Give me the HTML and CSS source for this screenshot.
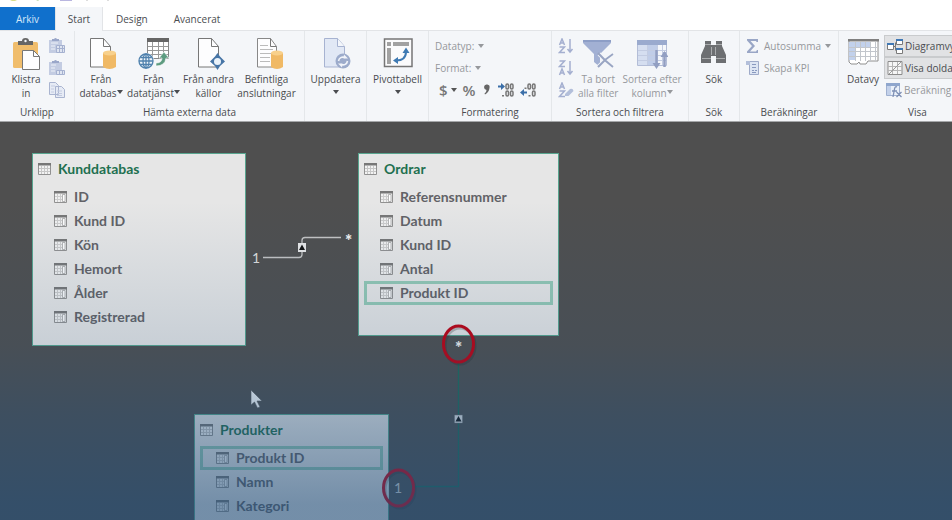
FILE: index.html
```html
<!DOCTYPE html>
<html lang="sv">
<head>
<meta charset="utf-8">
<title>Diagramvy</title>
<link rel="stylesheet" href="styles.css">
</head>
<body>
<svg class="defs" aria-hidden="true">
  <symbol id="table" viewBox="0 0 13 12">
    <path d="M.5 .5h12v11h-12z" fill="#f2f2f2" stroke="#919191"/>
    <path d="M0 0h13v2.500H0z" fill="#777"/>
    <path d="M3.500 3v8M6.500 3v8M9.500 3v8M1 5.500h11M1 8.500h11" stroke="#c6c6c6" fill="none"/>
  </symbol>
  <symbol id="column" viewBox="0 0 13 12">
    <path d="M.5 .5h12v11h-12z" fill="#f0f0f0" stroke="#919191"/>
    <path d="M0 0h13v2.500H0z" fill="#777"/>
    <path d="M3.500 3v8M6.500 3v8M1 5.500h7M1 8.500h7" stroke="#ccc" fill="none"/>
    <path d="M8.500 3.500h2.500v7H8.500z" fill="#fff" stroke="#999" stroke-width=".7"/>
  </symbol>
</svg>

<header class="titlebar">
  <svg width="130" height="3" viewBox="0 0 130 3" aria-hidden="true"><path d="M10 0h7l-2 1h-3z" fill="#d9dc8a"/><path d="M36 0h3l-1 1z" fill="#b9d7a8"/><path d="M60 0h12v1H60z" fill="#b9b6e0"/><path d="M86 0h2M107 0h2" stroke="#bbb"/></svg>
</header>
<nav class="tabs">
  <button class="tab tab-file">Arkiv</button>
  <button class="tab tab-active">Start</button>
  <button class="tab">Design</button>
  <button class="tab">Avancerat</button>
</nav>

<section class="ribbon">
  <div class="group g-clip">
    <div class="tools">
      <button class="big">
        <svg width="32" height="32" viewBox="0 0 32 32"><rect x="3" y="4" width="25" height="26" rx="1.500" fill="#f0bd6c"/><path d="M8 7V3h4q0-3 3.500-3T19 3h4v4z" fill="#666"/><circle cx="15.500" cy="3" r="1.200" fill="#f4f6f9"/><path d="M12.500 12.500h11l6 6v13h-17z" fill="#fdfdfe" stroke="#777"/><path d="M23.500 12.500v6h6" fill="none" stroke="#777"/></svg>
        <span>Klistra<br>in</span>
      </button>
      <div class="stack small">
        <button class="mini" disabled aria-label="Lägg till"><svg width="18" height="16" viewBox="0 0 18 16"><path d="M1 2h13v13H1z" fill="#c3cce2"/><path d="M4 3V1h2q1.500-2 3 0h2v2z" fill="#9aa7c9"/><path d="M3 5h7M3 8h4M3 11h4" stroke="#edf1f8"/><path d="M8.500 7.500h8v7h-8zM8 10.500h9M11.500 8v6M14.500 8v6" fill="#dfe5f1" stroke="#a5b1d0"/></svg></button>
        <button class="mini" disabled aria-label="Ersätt"><svg width="18" height="16" viewBox="0 0 18 16"><path d="M1 2h13v13H1z" fill="#c3cce2"/><path d="M4 3V1h2q1.500-2 3 0h2v2z" fill="#9aa7c9"/><path d="M3 5h5M3 8h4M3 11h4" stroke="#edf1f8"/><path d="M8.500 10.500h8v4h-8zM11.500 10v5M14.500 10v5" fill="#dfe5f1" stroke="#a5b1d0"/></svg></button>
        <button class="mini" disabled aria-label="Kopiera"><svg width="18" height="16" viewBox="0 0 18 16"><path d="M1.500 .5h6l3 3v9h-9zM7.500 4.500h6l3 3v8h-9z" fill="#e6ebf5" stroke="#a9b4d0"/><path d="M3 4h4M3 7h3M3 10h3M9 9h5M9 11.500h5M9 13.500h5" stroke="#c3cbe0"/></svg></button>
      </div>
    </div>
    <h2>Urklipp</h2>
  </div>

  <div class="group g-data">
    <div class="tools">
      <button class="big">
        <svg width="32" height="32" viewBox="0 0 32 32"><path d="M5.500 .5h13l7 8v20.500h-20z" fill="#fdfdfe" stroke="#777"/><path d="M18.500 .5v8h7" fill="none" stroke="#777"/><path d="M18 15v14q6.500 4 13 0V15z" fill="#f0b965"/><ellipse cx="24.500" cy="15" rx="6.500" ry="2.500" fill="#f8d08b"/></svg>
        <span>Från<br>databas<i class="caret"></i></span>
      </button>
      <button class="big">
        <svg width="32" height="32" viewBox="0 0 32 32"><path d="M9.500 .5h21v20h-21z" fill="#fff" stroke="#888"/><path d="M9 0h22v4H9z" fill="#666"/><path d="M14.500 4v16M20.500 4v16M25.500 4v16M10 8.500h20M10 12.500h20M10 16.500h20" stroke="#999" fill="none"/><circle cx="8" cy="23" r="8" fill="#eef4fa"/><g fill="none" stroke="#4f81ad" stroke-width="1.300"><circle cx="8" cy="23" r="7"/><ellipse cx="8" cy="23" rx="3" ry="7"/><path d="M1 23h14M8 16v14M2.500 19.500h11M2.500 26.500h11"/></g><path d="M18 25q6 0 6-5h-3l5-6 5 6h-3q-1 8-10 8z" fill="#5d9b80" stroke="#fff" stroke-width=".6"/></svg>
        <span>Från<br>datatjänst<i class="caret"></i></span>
      </button>
      <button class="big">
        <svg width="32" height="32" viewBox="0 0 32 32"><path d="M5.500 .5h13l7 8v20.500h-20z" fill="#fdfdfe" stroke="#777"/><path d="M18.500 .5v8h7" fill="none" stroke="#777"/><path d="M24.500 15l2.500 3.500 5 5-5 4.500-2.500 4-2.500-4-5-4.500 5-5z" fill="#4775a6"/><circle cx="24.500" cy="23.500" r="3.500" fill="#eaf2fa"/></svg>
        <span>Från andra<br>källor</span>
      </button>
      <button class="big">
        <svg width="32" height="32" viewBox="0 0 32 32"><path d="M6.500 .5h13l6 8v20.500h-19z" fill="#fdfdfe" stroke="#888"/><path d="M19.500 .5v8h6" fill="none" stroke="#777"/><path d="M9 7.500h8M9 11.500h13M9 15.500h11M9 19.500h10M9 23.500h10" stroke="#bbb"/><path d="M20 15v14q6 4 12 0V15z" fill="#f0b965"/><ellipse cx="26" cy="15" rx="6" ry="2.500" fill="#f8d08b"/></svg>
        <span>Befintliga<br>anslutningar</span>
      </button>
    </div>
    <h2>Hämta externa data</h2>
  </div>

  <div class="group g-one">
    <div class="tools">
      <button class="big">
        <svg width="32" height="32" viewBox="0 0 32 32"><path d="M4.500 .5h13l7 8v20.500h-20z" fill="#e1e8f5" stroke="#a7b3d1"/><path d="M17.500 .5v8h7" fill="#f3f6fb" stroke="#a7b3d1"/><circle cx="23" cy="23" r="7.500" fill="#9cabcb"/><path d="M18.500 23q1-5 7-3.500M27.500 23q-1 5-7 3.500" fill="none" stroke="#f1f4fa" stroke-width="1.600"/><path d="M24 16.500l4 4h-4.500zM22 29.500l-4-4h4.500z" fill="#f1f4fa"/></svg>
        <span>Uppdatera<br><i class="caret"></i></span>
      </button>
    </div>
  </div>

  <div class="group g-one">
    <div class="tools">
      <button class="big">
        <svg width="32" height="32" viewBox="0 0 32 32"><path d="M2.500 1h27.500v27.500H2.500z" fill="#fbfbfc" stroke="#757575" stroke-width="1.500"/><path d="M5 4h4v4H5zM11 4h16v4H11zM5 10h4v16H5z" fill="#a2a2a2"/><path d="M14 22.500q10 0 10-9" fill="none" stroke="#3f7ab3" stroke-width="2"/><path d="M24 9.500l3.500 5.500h-7zM11 22.500l5-3.500v7z" fill="#3f7ab3"/></svg>
        <span>Pivottabell<br><i class="caret"></i></span>
      </button>
    </div>
  </div>

  <div class="group g-format">
    <div class="tools stack">
      <button class="line" disabled>Datatyp:<i class="caret"></i></button>
      <button class="line" disabled>Format:<i class="caret"></i></button>
      <div class="line formats">
        <button class="sym" aria-label="Valuta"><b>$</b><i class="caret"></i></button>
        <button class="sym" aria-label="Procent"><b>%</b></button>
        <button class="sym" aria-label="Tusental"><svg width="10" height="12" viewBox="-1 0 10 12"><path d="M1 3a2.800 2.800 0 1 1 5.500 1Q6 8 2 10.500L1.500 9.500Q3.500 8 3.500 6Q1 5.500 1 3z" fill="#666"/></svg></button>
        <button class="sym" aria-label="Öka decimal"><svg width="16" height="14" viewBox="0 0 16 14"><path d="M0 2.500h3V0l4 3.500L3 7V4.500H0z" fill="#3a6ea8"/><g fill="none" stroke="#777" stroke-width="1.500"><rect x="8" y="1" width="2.500" height="5" rx="1.200"/><rect x="12.500" y="1" width="2.500" height="5" rx="1.200"/><rect x="8" y="8" width="2.500" height="5" rx="1.200"/><rect x="12.500" y="8" width="2.500" height="5" rx="1.200"/></g><path d="M4 12h2v1.500H4z" fill="#777"/></svg></button>
        <button class="sym" aria-label="Minska decimal"><svg width="16" height="14" viewBox="0 0 16 14"><path d="M7 8.500H4V6L0 9.500 4 13v-2.500h3z" fill="#3a6ea8"/><g fill="none" stroke="#777" stroke-width="1.500"><rect x="8" y="1" width="2.500" height="5" rx="1.200"/><rect x="12.500" y="1" width="2.500" height="5" rx="1.200"/><rect x="12.500" y="8" width="2.500" height="5" rx="1.200"/></g><path d="M4.500 4.500h2V6h-2zM8.500 12h2v1.500h-2z" fill="#777"/></svg></button>
      </div>
    </div>
    <h2>Formatering</h2>
  </div>

  <div class="group g-sort">
    <div class="tools">
      <div class="stack">
        <button class="mini" disabled aria-label="Stigande"><svg width="16" height="16" viewBox="0 0 16 16"><g fill="none" stroke="#a4afd0" stroke-width="1.500"><path d="M1.500 7l2.500-6 2.500 6M2 5h4M1.500 9h5l-5 5.500H7M12 1v13M9.500 11l2.500 3 2.500-3"/></g></svg></button>
        <button class="mini" disabled aria-label="Fallande"><svg width="16" height="16" viewBox="0 0 16 16"><g fill="none" stroke="#a4afd0" stroke-width="1.500"><path d="M1.500 1h5l-5 5.500H7M1.500 15l2.500-6 2.500 6M2 13h4M12 1v13M9.500 11l2.500 3 2.500-3"/></g></svg></button>
        <button class="mini" disabled aria-label="Rensa sortering"><svg width="16" height="16" viewBox="0 0 16 16"><g fill="none" stroke="#a4afd0" stroke-width="1.500"><path d="M1.500 7l2.500-6 2.500 6M2 5h4M1.500 9h5l-5 5.500H7"/></g><path d="M7 12l5-5q3-1 3.500 2l-5 5H7z" fill="#b3bfda"/></svg></button>
      </div>
      <button class="big" disabled>
        <svg width="32" height="32" viewBox="0 0 32 32"><path d="M1 2h28v3L18 16v13l-6-5v-8L1 5z" fill="#a2b0d3"/><path d="M1 2h28v2H1z" fill="#8d9ec6"/><path d="M17 16l14 13M30 16L15 30" stroke="#f4f6f9" stroke-width="4"/><path d="M16 15q7 8 15 14M31 16q-8 5-15 13" stroke="#99a5c3" stroke-width="2" fill="none"/></svg>
        <span>Ta bort<br>alla filter</span>
      </button>
      <button class="big" disabled>
        <svg width="32" height="32" viewBox="0 0 32 32"><path d="M1.500 3.500h29v24h-29z" fill="#f5f7fb" stroke="#b3bdd7"/><path d="M1 2h30v5H1z" fill="#9aaace"/><path d="M2 7h10v20H2z" fill="#d5def0"/><path d="M12 7h9v20h-9z" fill="#c0cde8"/><path d="M11.500 7v20M21.500 7v20M26.500 7v20M2 12.500h28M2 17.500h28M2 22.500h28" stroke="#c3cce2"/><path d="M20.500 12v16M28.500 29V14" stroke="#929fc2" stroke-width="2.500"/><path d="M16.500 25h8l-4 6zM24.500 19h8l-4-6z" fill="#929fc2"/></svg>
        <span>Sortera efter<br>kolumn<i class="caret"></i></span>
      </button>
    </div>
    <h2>Sortera och filtrera</h2>
  </div>

  <div class="group g-find">
    <div class="tools">
      <button class="big">
        <svg width="32" height="32" viewBox="0 0 32 32"><path d="M7 3h6v4h5V3h6v5l4 9v8h-10v-7h-5v7H3v-8L7 8z" fill="#6d6f72"/><path d="M7 6.500h6M18 6.500h6M4 20.500h9M18 20.500h9M13.500 9v8M17.500 9v8" stroke="#a9abad"/></svg>
        <span>Sök</span>
      </button>
    </div>
    <h2>Sök</h2>
  </div>

  <div class="group g-calc">
    <div class="tools stack">
      <button class="line" disabled><svg width="14" height="16" viewBox="0 0 14 16"><path d="M1 1h11v3h-1.500l-.5-1H4.500L9 8l-5 5.500h6l1-1.500h1v3H1v-1.500L6 8 1 2.500z" fill="#99a6c6"/></svg><span>Autosumma</span><i class="caret"></i></button>
      <button class="line" disabled><svg width="14" height="16" viewBox="0 0 14 16"><path d="M3.500 1.500h9v13h-9z" fill="#dde5f3" stroke="#9fabc9"/><path d="M0 1h4v4H0z" fill="#b3bfda"/><path d="M6 4.500h4M6 7.500h4M6 10.500h2M9 10.500h2M6 12.500h4" stroke="#8999bf"/></svg><span>Skapa KPI</span></button>
    </div>
    <h2>Beräkningar</h2>
  </div>

  <div class="group g-view">
    <div class="tools">
      <button class="big">
        <svg width="32" height="32" viewBox="0 0 32 32"><path d="M2 2h29v21H21l-2 3h-6l-1-2-2 2H4l-2-2z" fill="#fff" stroke="#909090"/><path d="M2 4h6v18H2zM8 4h15v5H8z" fill="#c2d1ec"/><path d="M1 1h31v2.500H1z" fill="#808080"/><path d="M8.500 4v19M13.500 4v19M18.500 4v19M23.500 4v19M28.500 4v19M2 9.500h28M2 13.500h28M2 18.500h28" stroke="#c2c6cc"/></svg>
        <span>Datavy</span>
      </button>
      <div class="stack toggles">
        <button class="line toggle" aria-pressed="true"><svg width="16" height="16" viewBox="0 0 16 16"><g fill="#fff" stroke="#7a7a7a"><path d="M.5 5.500h6v6h-6zM9.500 1.500h6v5h-6zM9.500 10.500h6v5h-6z"/></g><path d="M0 5h7v2H0zM9 1h7v2H9zM9 10h7v2H9z" fill="#3f78b5"/><path d="M7 8.500h1.500V4.500M8.500 8.500v4" stroke="#777" fill="none"/></svg><span>Diagramvy</span></button>
        <button class="line toggle" aria-pressed="true"><svg width="16" height="16" viewBox="0 0 16 16"><path d="M1 1.500h14v13H1z" fill="#f6f6f6" stroke="#8c8c8c"/><path d="M5.500 2v12M10.500 2v12M1 6.500h14M1 10.500h14" stroke="#b5b5b5"/><path d="M2 14L14 2" stroke="#999"/></svg><span>Visa dolda</span></button>
        <button class="line" disabled><svg width="16" height="16" viewBox="0 0 16 16"><path d="M.5 2.500h13v11H.5z" fill="#eaf0f9" stroke="#9fb0d0"/><path d="M0 1h14v3H0z" fill="#8fa6cd"/><path d="M1 4h4v9H1z" fill="#c3d1ea"/><path d="M11 5q-2-1-2.500 2L7 15M6 9h5M10.500 10l5 5M15.500 10l-5 5" stroke="#7e90b5" fill="none" stroke-width="1.300"/></svg><span>Beräkning</span></button>
      </div>
    </div>
    <h2>Visa</h2>
  </div>
</section>

<main class="canvas">
  <article class="node node-customers">
    <h3><svg width="13" height="12"><use href="#table"/></svg>Kunddatabas</h3>
    <ul>
      <li><svg width="13" height="12"><use href="#column"/></svg>ID</li>
      <li><svg width="13" height="12"><use href="#column"/></svg>Kund ID</li>
      <li><svg width="13" height="12"><use href="#column"/></svg>Kön</li>
      <li><svg width="13" height="12"><use href="#column"/></svg>Hemort</li>
      <li><svg width="13" height="12"><use href="#column"/></svg>Ålder</li>
      <li><svg width="13" height="12"><use href="#column"/></svg>Registrerad</li>
    </ul>
  </article>
  <article class="node node-orders">
    <h3><svg width="13" height="12"><use href="#table"/></svg>Ordrar</h3>
    <ul>
      <li><svg width="13" height="12"><use href="#column"/></svg>Referensnummer</li>
      <li><svg width="13" height="12"><use href="#column"/></svg>Datum</li>
      <li><svg width="13" height="12"><use href="#column"/></svg>Kund ID</li>
      <li><svg width="13" height="12"><use href="#column"/></svg>Antal</li>
      <li class="key"><svg width="13" height="12"><use href="#column"/></svg>Produkt ID</li>
    </ul>
  </article>
  <article class="node node-products">
    <h3><svg width="13" height="12"><use href="#table"/></svg>Produkter</h3>
    <ul>
      <li class="key"><svg width="13" height="12"><use href="#column"/></svg>Produkt ID</li>
      <li><svg width="13" height="12"><use href="#column"/></svg>Namn</li>
      <li><svg width="13" height="12"><use href="#column"/></svg>Kategori</li>
    </ul>
  </article>

  <svg class="links" width="600" height="398" viewBox="0 0 600 398">
    <path d="M263 135.500h36q3 0 3-3v-14q0-3 3-3h36" fill="none" stroke="#c4c4c4" stroke-width="1.300"/>
    <path d="M298 121h8v9h-8z" fill="#e8e8e8"/><path d="M302 122.500l3 5.500h-6z" fill="#111"/>
    <text x="252" y="141">1</text>
    <text class="many" x="345" y="125">*</text>
    <path d="M458.500 240v124.500H411" fill="none" stroke="#1d6b58" stroke-width="1.300"/>
    <path d="M454.500 293h8v8h-8z" fill="#e6e6e6" stroke="#777" stroke-width=".5"/><path d="M458.500 294l3 5.500h-6z" fill="#111"/>
    <text class="many" x="455" y="232">*</text>
    <text x="394" y="371">1</text>
    <path d="M388 355v22" stroke="#e6eef4" stroke-width="1.500"/>
    <g fill="none" stroke-width="3">
      <ellipse cx="460" cy="224" rx="15" ry="18" stroke="#222" stroke-opacity=".25"/>
      <ellipse cx="458.500" cy="222" rx="15" ry="18" stroke="#c00010"/>
      <ellipse cx="400" cy="368" rx="15" ry="18" stroke="#222" stroke-opacity=".25"/>
      <ellipse cx="398.500" cy="366" rx="15" ry="18" stroke="#d00012"/>
    </g>
    <path d="M251 268v15l3.500-3 3 6 2.500-1-3-6h5z" fill="#fff" stroke="#555" stroke-width=".6"/>
  </svg>
</main>
</body>
</html>
```
FILE: styles.css
```css
* { box-sizing: border-box; }
body {
  margin: 0;
  height: 100vh;
  display: flex;
  flex-direction: column;
  overflow: hidden;
  background: #fff;
  color: #4a4c50;
  font: 10px/14px "Open Sans", "Noto Sans", sans-serif;
}
button {
  margin: 0;
  padding: 0;
  border: 0;
  background: none;
  color: inherit;
  font: inherit;
}
button:disabled { color: #96989c; }
svg { flex: none; display: block; }
.defs { position: absolute; width: 0; height: 0; }

.titlebar { height: 7px; flex: none; }
.tabs { display: flex; height: 23px; flex: none; }
.tab { padding: 0 13px; height: 24px; }
.tab-file { width: 55px; background: #1070cc; color: #d6e8fa; }
.tab-active {
  width: 48px;
  padding: 0;
  z-index: 1;
  background: #f4f6f9;
  border: solid #e2e4e7;
  border-width: 0 1px;
}

.ribbon {
  display: flex;
  flex: none;
  height: 92px;
  background: #f4f6f9;
  border-top: 1px solid #e2e4e7;
  border-bottom: 1px solid #a5a7a9;
}
.group {
  display: flex;
  flex-direction: column;
  flex: none;
  padding-bottom: 2px;
  border-right: 1px solid #e4e7ea;
}
.group h2 {
  margin: 0;
  font: inherit;
  text-align: center;
}
.tools { display: flex; flex: 1; padding-top: 7px; }
.big {
  display: flex;
  flex-direction: column;
  align-items: center;
  white-space: nowrap;
  gap: 2px;
}
.stack {
  display: flex;
  flex-direction: column;
  align-items: flex-start;
}
.mini { height: 22px; display: flex; align-items: flex-start; }
.caret {
  display: inline-block;
  margin-left: 3px;
  vertical-align: 3px;
  border: 3px solid transparent;
  border-top: 4px solid currentColor;
  border-bottom: 0;
}
br + .caret { margin-left: 0; }
.line {
  display: flex;
  align-items: center;
  height: 22px;
  gap: 4px;
  white-space: nowrap;
}
.line > .caret { margin-left: 0; }
.g-clip { width: 75px; }
.g-clip .tools { gap: 6px; padding-left: 10px; }
.g-data { width: 230px; }
.g-data .tools {
  display: grid;
  grid-template-columns: 52px 53px 57px 59px;
  align-content: start;
}
.g-one { width: 62px; }
.g-one .big { width: 100%; }
.g-format { width: 123px; }
.g-format .tools, .g-calc .tools { padding: 4px 0 0 6px; }
.formats { gap: 6px; padding-left: 4px; }
.sym { display: flex; align-items: center; color: #555; }
.sym b { font: 600 15px/20px "Open Sans", sans-serif; color: #777; }
.g-sort { width: 137px; }
.g-sort .tools { padding-left: 6px; gap: 4px; }
.g-find { width: 51px; }
.g-find .big { width: 100%; }
.g-calc { width: 99px; }
.g-view { flex: 1 0 158px; }
.g-view .tools { padding-left: 8px; gap: 5px; }
.toggles { flex: 1; margin-top: -3px; }
.toggles .line { width: 100%; padding-left: 2px; gap: 2px; }
.toggle { background: #e1e2e4; border: 1px solid #c9cbcd; }

.canvas {
  position: relative;
  flex: 1;
  overflow: hidden;
  background: #4f4f4f;
}
.canvas::after {
  content: "";
  position: absolute;
  inset: 0;
  pointer-events: none;
  background: linear-gradient(rgba(33, 79, 124, 0) 20%, rgba(33, 79, 124, .15) 56%, rgba(33, 79, 124, .38) 74%, rgba(33, 79, 124, .58) 96%);
}
.node {
  position: absolute;
  background: #e6e6e6;
  border: 1px solid #58a58f;
  color: #626267;
  font: 700 14px/24px Lato, sans-serif;
}
.node h3 {
  display: flex;
  align-items: center;
  gap: 7px;
  height: 29px;
  margin: 0;
  padding-left: 5px;
  font: inherit;
  color: #1f7050;
}
.node ul { margin: 0; padding: 2px 0 0; list-style: none; }
.node li {
  display: flex;
  align-items: center;
  gap: 7px;
  height: 24px;
  margin: 0 5px;
  padding-left: 16px;
}
.node .key { padding-left: 13px; border: 3px solid #93c8b5; }
.node-customers { left: 32px; top: 31px; width: 214px; padding-bottom: 16px; }
.node-orders { left: 358px; top: 31px; width: 201px; padding-bottom: 30px; }
.node-products { left: 194px; top: 292px; width: 195px; padding-bottom: 30px; }
.links { position: absolute; left: 0; top: 0; }
.links text { font: 14px Lato, sans-serif; fill: #ddd; }
.links .many { font-weight: 900; font-size: 17px; fill: #eee; }
```
